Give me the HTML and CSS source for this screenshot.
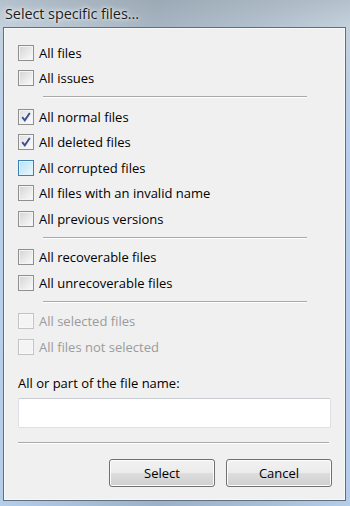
FILE: index.html
```html
<!DOCTYPE html>
<html>
<head>
<meta charset="utf-8">
<link rel="stylesheet" href="styles.css">
</head>
<body>
<div class="window">
  <div class="titlebar"><span class="title">Select specific files...</span></div>
  <div class="client">
    <div class="group">
      <label class="row"><span class="cb"></span><span>All files</span></label>
      <label class="row"><span class="cb"></span><span>All issues</span></label>
    </div>
    <div class="sep"></div>
    <div class="group">
      <label class="row"><span class="cb checked"><svg viewBox="0 0 10 10" width="10" height="10"><path d="M1.2 5.2 L3.8 8.4 L8.8 1" fill="none" stroke="#3d4f8f" stroke-width="1.9"/></svg></span><span>All normal files</span></label>
      <label class="row"><span class="cb checked"><svg viewBox="0 0 10 10" width="10" height="10"><path d="M1.2 5.2 L3.8 8.4 L8.8 1" fill="none" stroke="#3d4f8f" stroke-width="1.9"/></svg></span><span>All deleted files</span></label>
      <label class="row"><span class="cb hover"></span><span>All corrupted files</span></label>
      <label class="row"><span class="cb"></span><span>All files with an invalid name</span></label>
      <label class="row"><span class="cb"></span><span>All previous versions</span></label>
    </div>
    <div class="sep"></div>
    <div class="group">
      <label class="row"><span class="cb"></span><span>All recoverable files</span></label>
      <label class="row"><span class="cb"></span><span>All unrecoverable files</span></label>
    </div>
    <div class="sep"></div>
    <div class="group">
      <label class="row disabled"><span class="cb"></span><span>All selected files</span></label>
      <label class="row disabled"><span class="cb"></span><span>All files not selected</span></label>
    </div>
    <div class="field-label">All or part of the file name:</div>
    <div class="input"></div>
    <div class="sep wide"></div>
    <div class="buttons">
      <div class="btn">Select</div>
      <div class="btn">Cancel</div>
    </div>
  </div>
</div>
</body>
</html>
```
FILE: styles.css
```css
html, body {
  margin: 0;
  padding: 0;
}
body {
  width: 350px;
  height: 506px;
  overflow: hidden;
  font-family: "Open Sans", "Noto Sans", sans-serif;
}
.window {
  width: 350px;
  height: 506px;
  box-sizing: border-box;
  display: flex;
  flex-direction: column;
  background:
    linear-gradient(90deg, rgba(200,215,230,0.0) 0%, rgba(110,125,140,0.35) 45%, rgba(140,155,170,0.3) 75%, rgba(200,215,230,0) 100%),
    linear-gradient(180deg, #b4c1cc 0px, #c4d2de 27px, #b8d0ea 120px, #b4cde9 506px);
}
.titlebar {
  height: 27px;
  flex: none;
  display: flex;
  align-items: center;
  padding-left: 5px;
}
.title {
  font-size: 14.5px;
  color: #1c1c1c;
  text-shadow: 0 0 6px rgba(255,255,255,0.9), 0 0 3px rgba(255,255,255,0.9);
  letter-spacing: -0.1px;
}
.client {
  flex: 1;
  margin: 0 4px 5px 3px;
  border: 1px solid #5e6f80;
  box-shadow: inset 0 0 0 1px #f8f8f8;
  background: #f0f0f0;
  padding: 12px 0 0 14px;
  display: flex;
  flex-direction: column;
}
.group {
  display: flex;
  flex-direction: column;
}
.row {
  height: 25.5px;
  display: flex;
  align-items: center;
  gap: 5px;
  font-size: 13px;
  color: #000;
}
.row.disabled {
  color: #9b9b9b;
}
.cb {
  width: 14px;
  height: 14px;
  flex: none;
  border: 1px solid #8e8f8f;
  background: linear-gradient(135deg, #d3d3d3 0%, #ececec 60%, #fbfbfb 100%);
  box-shadow: inset 0 0 0 1px #f4f4f4;
  display: flex;
  align-items: center;
  justify-content: center;
}
.cb.checked {
  background: linear-gradient(135deg, #dedede 0%, #f2f2f2 60%, #fbfbfb 100%);
}
.cb.hover {
  border-color: #3c7fb1;
  background: linear-gradient(135deg, #b9e1f7 0%, #d6eefb 60%, #eaf7fe 100%);
  box-shadow: inset 0 0 0 1px #def3fd;
}
.row.disabled .cb {
  border-color: #c4c4c4;
  background: #f4f4f4;
  box-shadow: inset 0 0 0 1px #f8f8f8;
}
.sep {
  height: 0;
  border-top: 1px solid #a9a9a9;
  border-bottom: 1px solid #ffffff;
  margin: 5px 38px 6px 25px;
}
.field-label {
  margin-top: 14px;
  font-size: 13px;
  color: #000;
  height: 18px;
  line-height: 18px;
}
.input {
  margin-top: 6px;
  width: 313px;
  height: 30px;
  box-sizing: border-box;
  background: #fff;
  border: 1px solid #dcdfe3;
  border-top-color: #c9ccd1;
  border-radius: 2px;
}
.sep.wide {
  margin: 14px 16px 0 0;
}
.buttons {
  display: flex;
  justify-content: flex-end;
  gap: 11px;
  margin-top: 15px;
  padding-right: 13px;
}
.btn {
  width: 106px;
  height: 28px;
  box-sizing: border-box;
  border: 1px solid #707070;
  border-radius: 3px;
  background: linear-gradient(180deg, #f2f2f2 0%, #ebebeb 50%, #dddddd 51%, #cfcfcf 100%);
  box-shadow: inset 0 0 0 1px #fcfcfc;
  display: flex;
  align-items: center;
  justify-content: center;
  font-size: 13px;
  color: #000;
}
```
